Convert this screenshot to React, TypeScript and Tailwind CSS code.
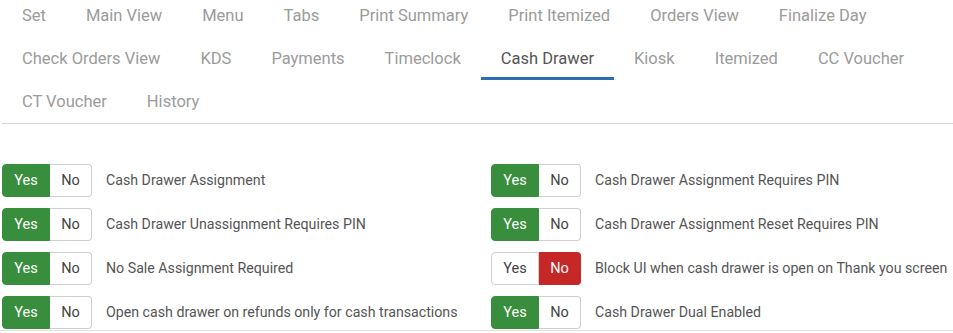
import { useState } from "react";

const tabs = [
  "Set",
  "Main View",
  "Menu",
  "Tabs",
  "Print Summary",
  "Print Itemized",
  "Orders View",
  "Finalize Day",
  "Check Orders View",
  "KDS",
  "Payments",
  "Timeclock",
  "Cash Drawer",
  "Kiosk",
  "Itemized",
  "CC Voucher",
  "CT Voucher",
  "History",
];

const settings = [
  { label: "Cash Drawer Assignment", value: true },
  { label: "Cash Drawer Assignment Requires PIN", value: true },
  { label: "Cash Drawer Unassignment Requires PIN", value: true },
  { label: "Cash Drawer Assignment Reset Requires PIN", value: true },
  { label: "No Sale Assignment Required", value: true },
  { label: "Block UI when cash drawer is open on Thank you screen", value: false },
  { label: "Open cash drawer on refunds only for cash transactions", value: true },
  { label: "Cash Drawer Dual Enabled", value: true },
];

function YesNo({ value, onChange }: { value: boolean; onChange: (v: boolean) => void }) {
  return (
    <div className="flex h-[33px] shrink-0 text-[14.5px]">
      <button
        onClick={() => onChange(true)}
        className={
          value
            ? "w-[48px] rounded-l-[4px] border border-[#388e3c] bg-[#388e3c] text-white"
            : "w-[48px] rounded-l-[4px] border border-[#cfcfcf] bg-white text-[#444]"
        }
      >
        Yes
      </button>
      <button
        onClick={() => onChange(false)}
        className={
          !value
            ? "w-[42px] rounded-r-[4px] border border-l-0 border-[#c62828] bg-[#c62828] text-white"
            : "w-[42px] rounded-r-[4px] border border-l-0 border-[#cfcfcf] bg-white text-[#444]"
        }
      >
        No
      </button>
    </div>
  );
}

export default function App() {
  const [active, setActive] = useState("Cash Drawer");
  const [values, setValues] = useState(settings.map((s) => s.value));

  return (
    <div className="bg-white pl-[2px] font-['Roboto',sans-serif]">
      {/* Tabs */}
      <div className="-mt-[6px] flex flex-wrap border-b border-[#d4d4d4]">
        {tabs.map((tab) => (
          <button
            key={tab}
            onClick={() => setActive(tab)}
            className={
              tab === active
                ? "flex h-[43px] items-center border-b-[3px] border-[#2c6db3] px-5 pt-[4px] text-[16.5px] text-[#555]"
                : "flex h-[43px] items-center border-b-[3px] border-transparent px-5 pt-[4px] text-[16.5px] text-[#9b9b9b]"
            }
          >
            {tab}
          </button>
        ))}
      </div>

      {/* Settings */}
      <div className="grid grid-cols-[489px_1fr] gap-y-[11px] pt-[40px]">
        {settings.map((s, i) => (
          <div key={s.label} className="flex items-center">
            <YesNo
              value={values[i]}
              onChange={(v) => setValues(values.map((x, j) => (j === i ? v : x)))}
            />
            <span className="ml-[14px] whitespace-nowrap text-[14.2px] text-[#555]">{s.label}</span>
          </div>
        ))}
      </div>
      <div className="-ml-[2px] mt-px border-t border-[#e2e2e2]" />
    </div>
  );
}
